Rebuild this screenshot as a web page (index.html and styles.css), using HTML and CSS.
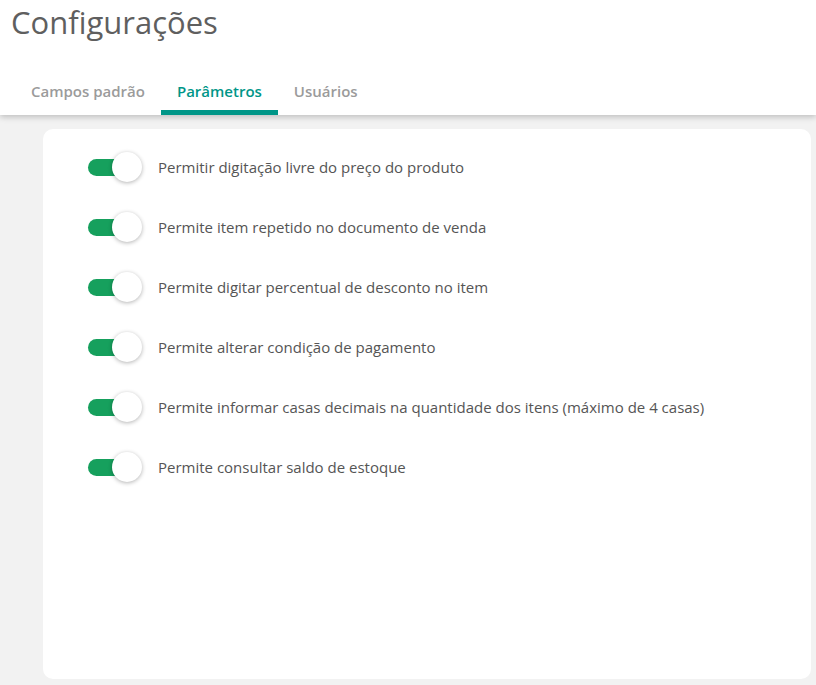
FILE: index.html
```html
<!DOCTYPE html>
<html lang="pt-BR">
<head>
  <meta charset="UTF-8">
  <title>Configurações</title>
  <meta name="viewport" content="width=device-width, initial-scale=1.0">
  <link rel="stylesheet" href="styles.css">
</head>
<body>
  <header class="header">
    <h1>Configurações</h1>
    <nav class="tabs">
      <a class="tab">Campos padrão</a>
      <a class="tab active">Parâmetros</a>
      <a class="tab">Usuários</a>
    </nav>
  </header>
  <main class="content">
    <div class="card">
      <label class="option">
        <span class="switch on"><span class="track"></span><span class="thumb"></span></span>
        <span class="option-text">Permitir digitação livre do preço do produto</span>
      </label>
      <label class="option">
        <span class="switch on"><span class="track"></span><span class="thumb"></span></span>
        <span class="option-text">Permite item repetido no documento de venda</span>
      </label>
      <label class="option">
        <span class="switch on"><span class="track"></span><span class="thumb"></span></span>
        <span class="option-text">Permite digitar percentual de desconto no item</span>
      </label>
      <label class="option">
        <span class="switch on"><span class="track"></span><span class="thumb"></span></span>
        <span class="option-text">Permite alterar condição de pagamento</span>
      </label>
      <label class="option">
        <span class="switch on"><span class="track"></span><span class="thumb"></span></span>
        <span class="option-text">Permite informar casas decimais na quantidade dos itens (máximo de 4 casas)</span>
      </label>
      <label class="option">
        <span class="switch on"><span class="track"></span><span class="thumb"></span></span>
        <span class="option-text">Permite consultar saldo de estoque</span>
      </label>
    </div>
  </main>
</body>
</html>
```

FILE: styles.css
```css
html, body {
  height: 100%;
}
body {
  font-family: 'Open Sans', 'Liberation Sans', sans-serif;
  background: #f2f2f2;
  margin: 0;
  padding: 0;
  display: flex;
  flex-direction: column;
}
.header {
  background: #fff;
  box-shadow: 0 2px 6px rgba(0,0,0,0.22);
  position: relative;
  z-index: 1;
}
h1 {
  font-size: 31px;
  font-weight: 400;
  color: #5f5f5f;
  margin: 0;
  padding: 0 0 0 11px;
  line-height: 44px;
}
.tabs {
  display: flex;
  padding-left: 15px;
  margin-top: 27px;
}
.tab {
  font-size: 15px;
  font-weight: 600;
  color: #9b9b9b;
  padding: 0 16px;
  height: 44px;
  line-height: 40px;
  box-sizing: border-box;
  border-bottom: 5px solid transparent;
  cursor: pointer;
}
.tab.active {
  color: #009688;
  border-bottom-color: #009688;
}
.content {
  flex: 1;
  padding: 14px 5px 6px 43px;
  display: flex;
}
.card {
  flex: 1;
  background: #fff;
  border-radius: 10px;
  padding: 8px 45px;
}
.option {
  display: flex;
  align-items: center;
  height: 60px;
  cursor: pointer;
}
.switch {
  position: relative;
  width: 54px;
  height: 30px;
  margin-right: 16px;
  flex-shrink: 0;
}
.track {
  position: absolute;
  left: 0;
  top: 7px;
  width: 44px;
  height: 17px;
  border-radius: 9px;
  background: #bdbdbd;
}
.thumb {
  position: absolute;
  left: 0;
  top: 0;
  width: 30px;
  height: 30px;
  border-radius: 50%;
  background: #fff;
  box-shadow: 0 1px 4px rgba(0,0,0,0.3);
}
.switch.on .track {
  background: #16a05d;
}
.switch.on .thumb {
  left: 24px;
}
.option-text {
  font-size: 15px;
  color: #555;
}
```
